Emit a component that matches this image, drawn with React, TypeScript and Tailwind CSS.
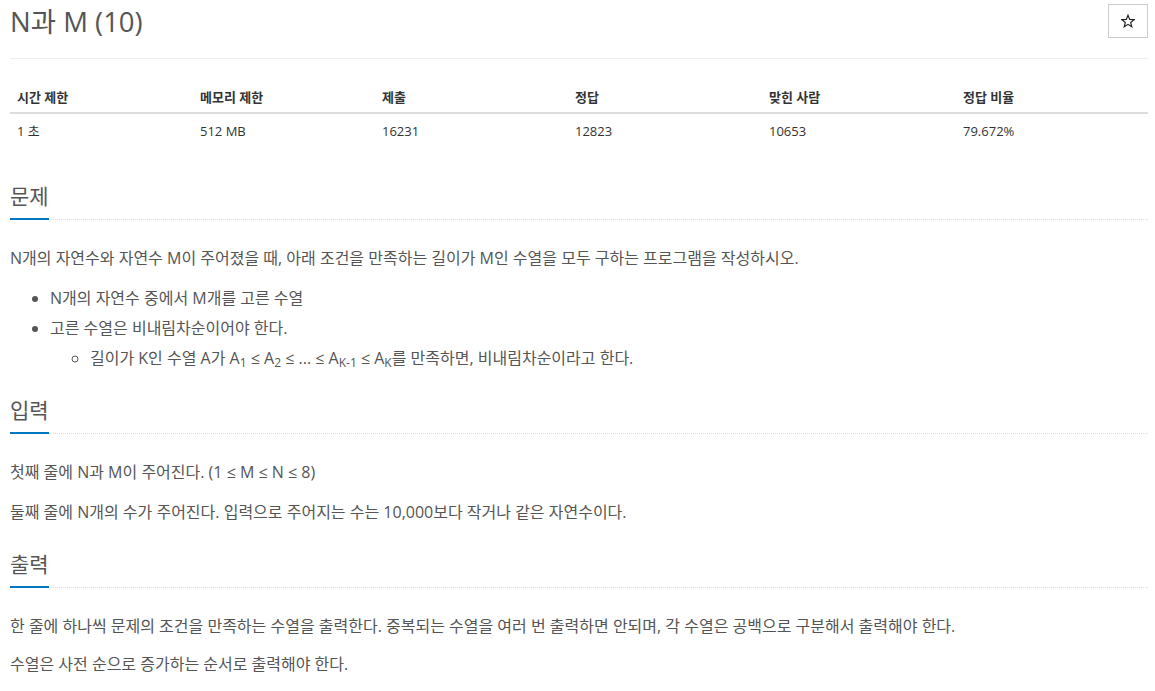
import React from "react";

const font = { fontFamily: '"Open Sans", "Noto Sans CJK KR", sans-serif' };

function Headline({ title, first }: { title: string; first?: boolean }) {
  return (
    <div className={`flex border-b border-dotted border-[#d5dce6] ${first ? "mt-[33px]" : "mt-[22px]"} mb-[23px]`}>
      <h2 className="-mb-px border-b-2 border-[#0076c0] pb-[7px] text-[21px] leading-[30px] font-normal text-[#555]">
        {title}
      </h2>
    </div>
  );
}

export default function App() {
  const cols = [
    { h: "시간 제한", v: "1 초", w: "w-[183px]" },
    { h: "메모리 제한", v: "512 MB", w: "w-[182px]" },
    { h: "제출", v: "16231", w: "w-[193px]" },
    { h: "정답", v: "12823", w: "w-[194px]" },
    { h: "맞힌 사람", v: "10653", w: "w-[194px]" },
    { h: "정답 비율", v: "79.672%", w: "w-[192px]" },
  ];
  return (
    <div className="bg-white min-h-[691px] pl-[10px] pr-[7px] pt-1 text-[#555]" style={font}>
      <div className="flex items-start justify-between">
        <h1 className="text-[27.5px] leading-[36px] font-normal text-[#555]">N과 M (10)</h1>
        <button className="flex h-[34px] w-[40px] items-center justify-center border border-[#ccc] bg-white">
          <svg width="14" height="14" viewBox="0 0 24 24" fill="none" stroke="#222" strokeWidth="2" strokeLinejoin="miter">
            <polygon points="12,2 14.9,9.2 22.5,9.6 16.6,14.5 18.5,22 12,17.8 5.5,22 7.4,14.5 1.5,9.6 9.1,9.2" />
          </svg>
        </button>
      </div>
      <div className="mt-[18px] border-t border-[#eee]" />
      <table className="mt-[21px] w-[1138px] table-fixed border-collapse text-[13px] text-[#333]">
        <thead>
          <tr className="border-b-2 border-[#ddd]">
            {cols.map((c) => (
              <th key={c.h} className={`${c.w} px-[7px] pt-2 pb-[6px] text-left font-bold leading-[18px]`}>
                {c.h}
              </th>
            ))}
          </tr>
        </thead>
        <tbody>
          <tr>
            {cols.map((c) => (
              <td key={c.h} className="px-[7px] py-2 leading-[18px]">
                {c.v}
              </td>
            ))}
          </tr>
        </tbody>
      </table>

      <div>
        <Headline title="문제" first />
        <div className="text-[16px] leading-[30px]">
          <p className="mb-[10px]">
            N개의 자연수와 자연수 M이 주어졌을 때, 아래 조건을 만족하는 길이가 M인 수열을 모두 구하는 프로그램을 작성하시오.
          </p>
          <ul className="mb-[10px] list-disc pl-[40px]">
            <li>N개의 자연수 중에서 M개를 고른 수열</li>
            <li>
              고른 수열은 비내림차순이어야 한다.
              <ul className="list-[circle] pl-[40px]">
                <li>
                  길이가 K인 수열 A가 A<sub className="text-[12px]">1</sub> ≤ A<sub className="text-[12px]">2</sub> ≤ ... ≤ A
                  <sub className="text-[12px]">K-1</sub> ≤ A<sub className="text-[12px]">K</sub>를 만족하면, 비내림차순이라고 한다.
                </li>
              </ul>
            </li>
          </ul>
        </div>

        <Headline title="입력" />
        <div className="text-[16px] leading-[30px]">
          <p className="mb-[10px]">첫째 줄에 N과 M이 주어진다. (1 ≤ M ≤ N ≤ 8)</p>
          <p className="mb-[10px]">둘째 줄에 N개의 수가 주어진다. 입력으로 주어지는 수는 10,000보다 작거나 같은 자연수이다.</p>
        </div>

        <Headline title="출력" />
        <div className="text-[16px] leading-[30px]">
          <p className="mb-[8px] mt-[3px]">
            한 줄에 하나씩 문제의 조건을 만족하는 수열을 출력한다. 중복되는 수열을 여러 번 출력하면 안되며, 각 수열은 공백으로 구분해서 출력해야 한다.
          </p>
          <p className="mb-[10px]">수열은 사전 순으로 증가하는 순서로 출력해야 한다.</p>
        </div>
      </div>
    </div>
  );
}
